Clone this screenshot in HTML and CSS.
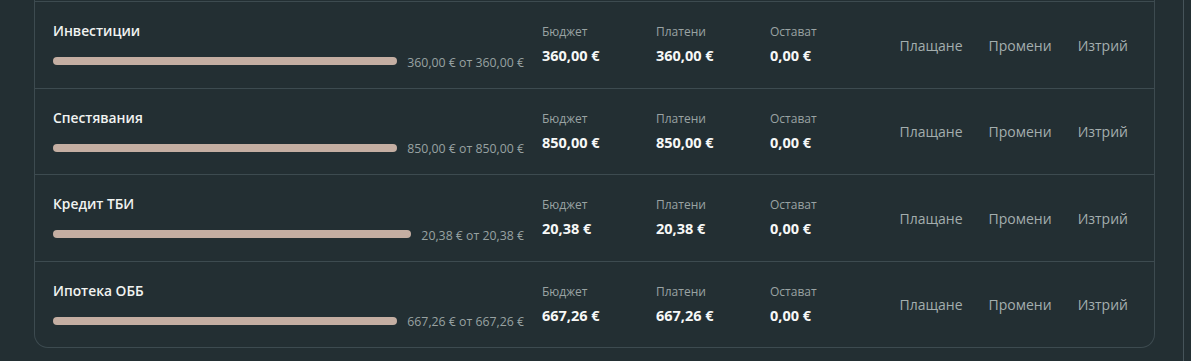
FILE: index.html
```html
<!DOCTYPE html>
<html lang="bg">
<head>
  <meta charset="UTF-8">
  <meta name="viewport" content="width=device-width, initial-scale=1.0">
  <title>Бюджет</title>
  <link rel="stylesheet" href="styles.css">
</head>
<body>
  <div class="panel">
    <div class="card">
      <div class="row">
        <div class="info">
          <div class="name">Инвестиции</div>
          <div class="progress">
            <div class="bar"></div>
            <span class="amount">360,00 € от 360,00 €</span>
          </div>
        </div>
        <div class="stat"><span class="label">Бюджет</span><span class="value">360,00 €</span></div>
        <div class="stat"><span class="label">Платени</span><span class="value">360,00 €</span></div>
        <div class="stat"><span class="label">Остават</span><span class="value">0,00 €</span></div>
        <div class="actions">
          <button>Плащане</button>
          <button>Промени</button>
          <button>Изтрий</button>
        </div>
      </div>

      <div class="row">
        <div class="info">
          <div class="name">Спестявания</div>
          <div class="progress">
            <div class="bar"></div>
            <span class="amount">850,00 € от 850,00 €</span>
          </div>
        </div>
        <div class="stat"><span class="label">Бюджет</span><span class="value">850,00 €</span></div>
        <div class="stat"><span class="label">Платени</span><span class="value">850,00 €</span></div>
        <div class="stat"><span class="label">Остават</span><span class="value">0,00 €</span></div>
        <div class="actions">
          <button>Плащане</button>
          <button>Промени</button>
          <button>Изтрий</button>
        </div>
      </div>

      <div class="row">
        <div class="info">
          <div class="name">Кредит ТБИ</div>
          <div class="progress">
            <div class="bar"></div>
            <span class="amount">20,38 € от 20,38 €</span>
          </div>
        </div>
        <div class="stat"><span class="label">Бюджет</span><span class="value">20,38 €</span></div>
        <div class="stat"><span class="label">Платени</span><span class="value">20,38 €</span></div>
        <div class="stat"><span class="label">Остават</span><span class="value">0,00 €</span></div>
        <div class="actions">
          <button>Плащане</button>
          <button>Промени</button>
          <button>Изтрий</button>
        </div>
      </div>

      <div class="row">
        <div class="info">
          <div class="name">Ипотека ОББ</div>
          <div class="progress">
            <div class="bar"></div>
            <span class="amount">667,26 € от 667,26 €</span>
          </div>
        </div>
        <div class="stat"><span class="label">Бюджет</span><span class="value">667,26 €</span></div>
        <div class="stat"><span class="label">Платени</span><span class="value">667,26 €</span></div>
        <div class="stat"><span class="label">Остават</span><span class="value">0,00 €</span></div>
        <div class="actions">
          <button>Плащане</button>
          <button>Промени</button>
          <button>Изтрий</button>
        </div>
      </div>
    </div>
  </div>
</body>
</html>
```

FILE: styles.css
```css
/* Общи стилове */
body {
  margin: 0;
  background-color: #232f33;
  font-family: "Open Sans", "Noto Sans", Arial, sans-serif;
  color: #eef1f0;
}
.panel {
  width: 1184px;
  height: 361px;
  border-right: 1px solid #46545a;
  box-sizing: border-box;
  padding-left: 34px;
  padding-right: 28px;
}
.card {
  border: 1px solid #3d4b50;
  border-top: none;
  border-radius: 0 0 14px 14px;
  padding-top: 1px;
}
.row {
  display: grid;
  grid-template-columns: 489px 114px 114px 114px 1fr;
  align-items: center;
  padding: 18px 18px 17.5px 18px;
  border-top: 1px solid #3d4b50;
}
.info {
  padding-right: 18px;
}
.name {
  font-size: 13.8px;
  font-weight: 600;
  line-height: 21px;
  color: #f1f3f1;
}
.progress {
  display: flex;
  align-items: center;
  gap: 10px;
  margin-top: 11px;
  height: 18px;
}
.bar {
  flex: 1;
  height: 8px;
  border-radius: 4px;
  background-color: #c4aea2;
}
.amount {
  font-size: 12.3px;
  color: #98a2a2;
  white-space: nowrap;
  padding-top: 2px;
}
.stat {
  display: flex;
  flex-direction: column;
  gap: 6px;
}
.label {
  font-size: 12px;
  line-height: 16px;
  color: #9aa3a3;
}
.value {
  font-size: 14.5px;
  font-weight: 700;
  line-height: 20px;
  color: #f7f8f7;
}
.actions {
  display: flex;
  justify-content: flex-end;
  gap: 10px;
}
.actions button {
  background: none;
  border: none;
  padding: 6px 8px;
  font-family: inherit;
  font-size: 14px;
  color: #a4aeae;
  cursor: pointer;
}
```
